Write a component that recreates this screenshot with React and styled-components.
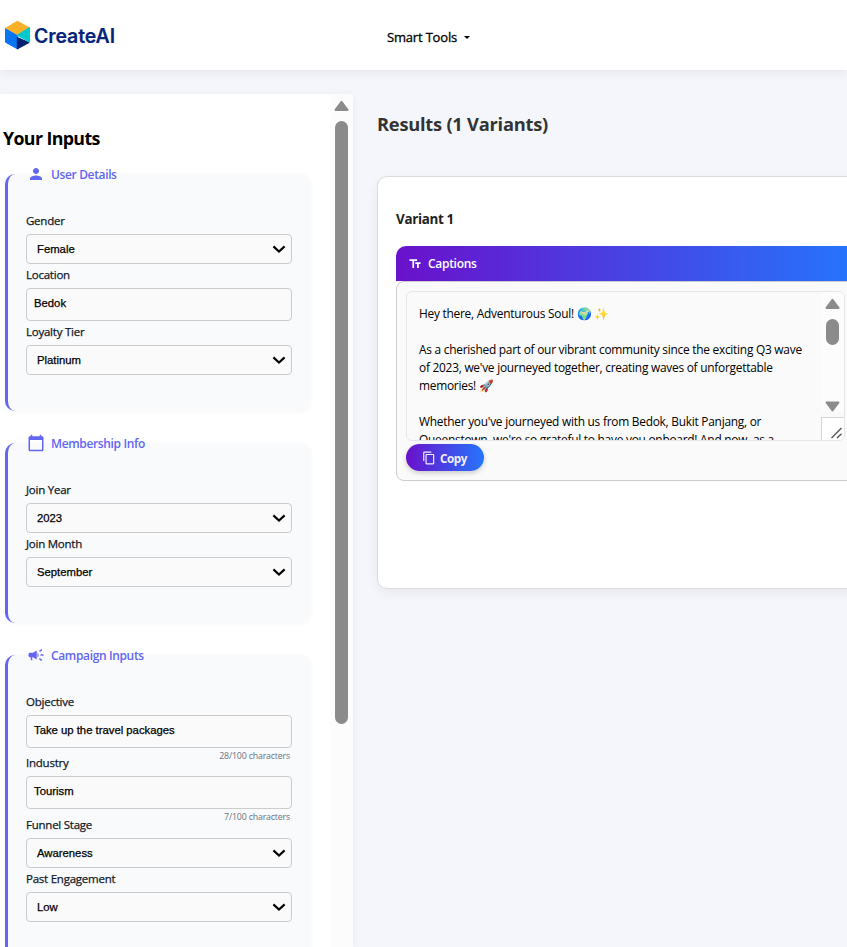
import React from 'react';
import styled, { createGlobalStyle } from 'styled-components';
import { MdPerson, MdCalendarToday, MdCampaign, MdTextFields, MdContentCopy } from 'react-icons/md';

const Global = createGlobalStyle`
  * { box-sizing: border-box; }
  body { margin: 0; overflow: hidden; background: #f4f6fb; font-family: "Open Sans", sans-serif; color: #000; }
`;

const Page = styled.div`
  display: flex;
  flex-direction: column;
  width: 847px;
  height: 947px;
  overflow: hidden;
`;

const Header = styled.header`
  flex: none;
  display: flex;
  align-items: center;
  height: 70px;
  padding: 4px 0 0 4px;
  background: #fff;
  box-shadow: 0 2px 10px rgba(0, 0, 0, 0.07);
`;

const Brand = styled.div`
  display: flex;
  align-items: center;
  gap: 3px;
  width: 383px;
  height: 34px;
  margin-top: -4px;
`;

const BrandName = styled.span`
  padding-top: 2px;
  font: 600 19.5px/28px Inter, sans-serif;
  letter-spacing: -0.1px;
  -webkit-text-stroke: 0.15px currentColor;
  color: #06247a;
`;

const NavItem = styled.button`
  display: flex;
  align-items: center;
  gap: 7px;
  padding: 0;
  border: 0;
  background: none;
  font: 400 13px/20px "Open Sans", sans-serif;
  letter-spacing: -0.18px;
  -webkit-text-stroke: 0.3px currentColor;
  color: #000;
`;

const Caret = styled.i`
  border: 3px solid transparent;
  border-top-color: #000;
  border-bottom: 0;
`;

const Body = styled.div`
  flex: 1;
  display: flex;
  min-height: 0;
  padding-top: 24px;
`;

const InputsPanel = styled.aside`
  flex: none;
  display: flex;
  width: 353px;
  background: #fff;
  border-top-right-radius: 4px;
  box-shadow: 0 2px 10px rgba(0, 0, 0, 0.06);
`;

const InputsContent = styled.div`
  width: 330px;
  padding: 30px 19px 0 5px;
`;

const PanelTitle = styled.h2`
  margin: 0 0 37px -2px;
  font-size: 17.8px;
  line-height: 28px;
  height: 13px;
  letter-spacing: -0.62px;
`;

const Section = styled.section`
  display: flow-root;
  height: ${(p) => p.$height}px;
  margin-bottom: ${(p) => p.$gap || 0}px;
  padding: 0 19px 0 18px;
  border-left: 3px solid #6366f1;
  border-radius: 10px;
  background: #f9fafc;
  box-shadow: 0 1px 4px rgba(0, 0, 0, 0.035);
`;

const SectionTop = styled.div`
  margin-top: -9px;
`;

const SectionTitle = styled.h3`
  display: flex;
  align-items: center;
  gap: 6px;
  height: 18px;
  margin: 0 0 27px 1px;
  font-size: 12px;
  font-weight: 600;
  letter-spacing: -0.36px;
  color: #6366f1;
  svg { flex: none; }
`;

const Label = styled.label`
  display: block;
  height: 24px;
  font-size: 11.5px;
  line-height: 22px;
  letter-spacing: -0.24px;
  -webkit-text-stroke: 0.25px currentColor;
  color: #111827;
`;

const Control = styled.div`
  display: flex;
  align-items: center;
  justify-content: space-between;
  width: 266px;
  height: ${(p) => (p.$select ? 30 : 33)}px;
  padding: ${(p) => (p.$select ? '0 5px 0 10px' : '0 7px 3px')};
  border: 1px solid #ccc;
  border-radius: 4px;
  background: #fafafa;
  font: 400 11.3px/16px "Liberation Sans", Arial, sans-serif;
  -webkit-text-stroke: 0.25px currentColor;
`;

const Count = styled.div`
  height: ${(p) => p.$height}px;
  padding-right: 2px;
  text-align: right;
  font-size: 8.8px;
  line-height: 16px;
  letter-spacing: -0.17px;
  color: #6b7280;
`;

const Scrollbar = styled.div`
  flex: none;
  display: flex;
  flex-direction: column;
  align-items: center;
  width: 23px;
  padding-top: 6px;
  background: #fcfcfc;
`;

const Thumb = styled.div`
  width: 13px;
  height: ${(p) => p.$height}px;
  margin: 10px 0 ${(p) => p.$below || 0}px;
  border-radius: 7px;
  background: #8b8b8b;
`;

const Results = styled.main`
  flex: none;
  width: 523px;
  padding: 15px 0 0 24px;
`;

const ResultsTitle = styled.h2`
  margin: 0 0 38px;
  height: 29px;
  font-size: 18.3px;
  line-height: 29px;
  letter-spacing: -0.24px;
  color: #333;
`;

const Card = styled.article`
  height: 413px;
  padding: 29px 18px 0;
  border: 1px solid #dcdcdc;
  border-radius: 10px;
  background: #fff;
  box-shadow: 0 4px 12px rgba(0, 0, 0, 0.06);
`;

const VariantTitle = styled.h3`
  height: 40px;
  margin: 0;
  font-size: 13.4px;
  line-height: 26px;
  letter-spacing: -0.32px;
  color: #222;
`;

const CaptionsBar = styled.div`
  display: flex;
  align-items: center;
  gap: 6px;
  height: 35px;
  padding-left: 12px;
  border-radius: 10px 10px 0 0;
  background: linear-gradient(90deg, #6a11cb, #2575fc);
  font-size: 12px;
  font-weight: 600;
  letter-spacing: -0.3px;
  color: #fff;
`;

const CaptionsBox = styled.div`
  height: 200px;
  padding: 9px;
  border: 1px solid #ccc;
  border-radius: 8px;
  background: #fafafa;
`;

const TextFrame = styled.div`
  display: flex;
  width: 439px;
  height: 150px;
  border: 1px solid #e5e7eb;
  border-radius: 6px;
  overflow: hidden;
`;

const CaptionText = styled.div`
  width: 415px;
  padding: 12px 0 0 12px;
  overflow: hidden;
  white-space: pre;
  font-size: 11.9px;
  line-height: 18px;
  letter-spacing: -0.245px;
`;

const ScrollColumn = styled.div`
  display: flex;
  flex-direction: column;
  justify-content: space-between;
`;

const Grip = styled.div`
  display: flex;
  align-items: flex-end;
  justify-content: flex-end;
  width: 23px;
  height: 23px;
  border: solid #d4d4d4;
  border-width: 1px 0 0 1px;
  background: #fff;
`;

const CopyButton = styled.button`
  display: flex;
  align-items: center;
  gap: 4px;
  width: 78px;
  height: 27px;
  margin-top: 3px;
  padding: 0 0 0 16px;
  border: 0;
  border-radius: 14px;
  background: linear-gradient(90deg, #6a11cb, #2575fc);
  box-shadow: 0 2px 5px rgba(0, 0, 0, 0.2);
  font: 700 11.7px/20px "Open Sans", sans-serif;
  letter-spacing: -0.45px;
  color: #f1efff;
`;

const Logo = () => (
  <svg width="27" height="30" viewBox="0 0 27 30">
    <path d="M13.3 1.2 25.6 7.8 13 15.2 1.5 8.3Z" fill="#fdb128" stroke="#fdb128" strokeLinejoin="round" />
    <path d="M1.5 8.8 13.3 15.6V28.8L1.5 22.2Z" fill="#0875f5" stroke="#0875f5" strokeLinejoin="round" />
    <path d="M13.3 17.5 25.2 22.6 13.3 28.9Z" fill="#062170" stroke="#062170" strokeLinejoin="round" />
    <path d="M25.6 7.4 13 15.2 25.6 22Z" fill="#04c8ce" stroke="#04c8ce" strokeLinejoin="round" />
  </svg>
);

const Chevron = () => (
  <svg width="14" height="8" viewBox="0 0 14 8">
    <path d="M1.4 1.4 7 6.5 12.6 1.4" fill="none" stroke="#000" strokeWidth="2.1" />
  </svg>
);

const Arrow = ({ down }) => (
  <svg width="15" height="11" viewBox="0 0 15 11">
    <path d={down ? 'M1.5 1.5H13.5L7.5 9.5Z' : 'M1.5 9.9H13.5L7.5 1.9Z'} fill="#8b8b8b" stroke="#8b8b8b" strokeWidth="2" strokeLinejoin="round" />
  </svg>
);

const Field = ({ label, value, select, count, countHeight }) => (
  <div>
    <Label>{label}</Label>
    <Control $select={select}>
      {value}
      {select && <Chevron />}
    </Control>
    {count && <Count $height={countHeight}>{count}</Count>}
  </div>
);

const Group = ({ icon: Icon, title, height, gap, children }) => (
  <Section $height={height} $gap={gap}>
    <SectionTop>
      <SectionTitle><Icon size={18} />{title}</SectionTitle>
      {children}
    </SectionTop>
  </Section>
);

const caption = `Hey there, Adventurous Soul! 🌍 ✨

As a cherished part of our vibrant community since the exciting Q3 wave
of 2023, we've journeyed together, creating waves of unforgettable
memories! 🚀

Whether you've journeyed with us from Bedok, Bukit Panjang, or
Queenstown, we're so grateful to have you onboard! And now, as a`;

export default function App() {
  return (
    <Page>
      <Global />
      <Header>
        <Brand><Logo /><BrandName>CreateAI</BrandName></Brand>
        <NavItem>Smart Tools <Caret /></NavItem>
      </Header>
      <Body>
        <InputsPanel>
          <InputsContent>
            <PanelTitle>Your Inputs</PanelTitle>
            <Group icon={MdPerson} title="User Details" height={237} gap={32}>
              <Field label="Gender" value="Female" select />
              <Field label="Location" value="Bedok" />
              <Field label="Loyalty Tier" value="Platinum" select />
            </Group>
            <Group icon={MdCalendarToday} title="Membership Info" height={180} gap={32}>
              <Field label="Join Year" value="2023" select />
              <Field label="Join Month" value="September" select />
            </Group>
            <Group icon={MdCampaign} title="Campaign Inputs" height={330}>
              <Field label="Objective" value="Take up the travel packages" count="28/100 characters" countHeight={4} />
              <Field label="Industry" value="Tourism" count="7/100 characters" countHeight={5} />
              <Field label="Funnel Stage" value="Awareness" select />
              <Field label="Past Engagement" value="Low" select />
            </Group>
          </InputsContent>
          <Scrollbar>
            <Arrow />
            <Thumb $height={603} />
          </Scrollbar>
        </InputsPanel>
        <Results>
          <ResultsTitle>Results (1 Variants)</ResultsTitle>
          <Card>
            <VariantTitle>Variant 1</VariantTitle>
            <CaptionsBar><MdTextFields size={14} />Captions</CaptionsBar>
            <CaptionsBox>
              <TextFrame>
                <CaptionText>{caption}</CaptionText>
                <ScrollColumn>
                  <Scrollbar>
                    <Arrow />
                    <Thumb $height={26} $below={56} />
                    <Arrow down />
                  </Scrollbar>
                  <Grip>
                    <svg width="14" height="14" viewBox="0 0 14 14">
                      <path d="M1.5 12 11.5 2M7 12 11.5 7.8" stroke="#555" strokeWidth="1.4" />
                    </svg>
                  </Grip>
                </ScrollColumn>
              </TextFrame>
              <CopyButton><MdContentCopy size={14} />Copy</CopyButton>
            </CaptionsBox>
          </Card>
        </Results>
      </Body>
    </Page>
  );
}
